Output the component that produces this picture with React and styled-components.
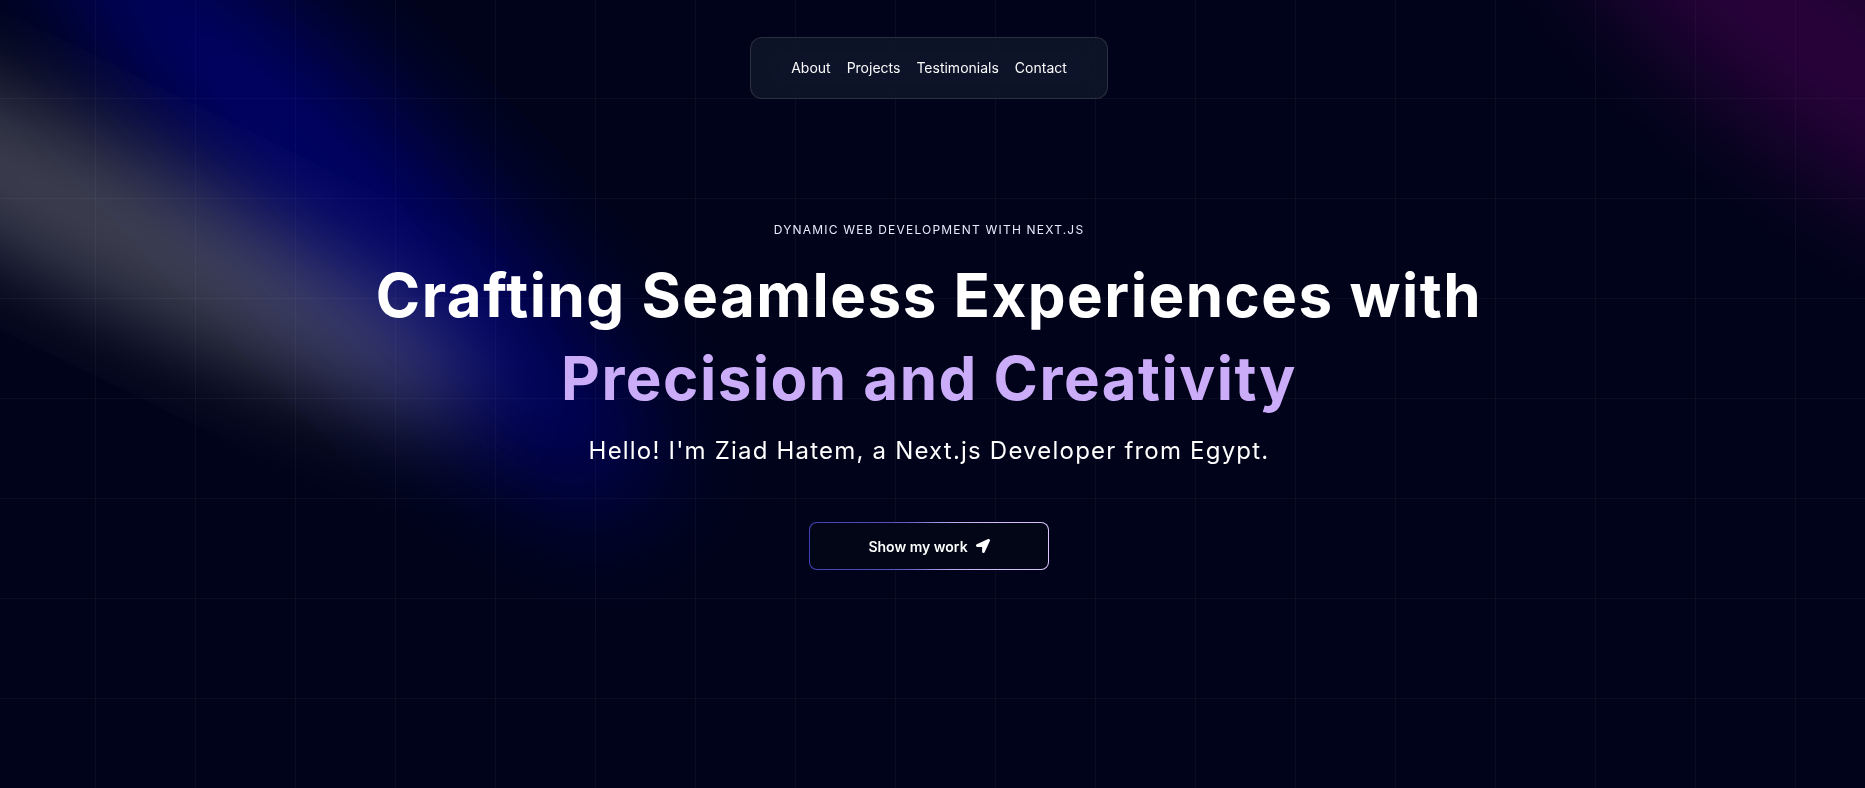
import React from "react";
import styled, { createGlobalStyle } from "styled-components";
import { FaLocationArrow } from "react-icons/fa";

const GlobalStyle = createGlobalStyle`
  * {
    box-sizing: border-box;
  }
  body {
    margin: 0;
    background: #000319;
    font-family: Inter, "Noto Sans", sans-serif;
    color: #fff;
  }
`;

const links = ["About", "Projects", "Testimonials", "Contact"];

// the blurred spotlights behind the hero
const Glows = () => (
  <GlowLayer viewBox="0 0 1865 788" preserveAspectRatio="none">
    <defs>
      <filter id="soft" x="-50%" y="-50%" width="200%" height="200%">
        <feGaussianBlur stdDeviation="46" />
      </filter>
      <filter id="softer" x="-50%" y="-50%" width="200%" height="200%">
        <feGaussianBlur stdDeviation="58" />
      </filter>
    </defs>
    <ellipse
      cx="345"
      cy="195"
      rx="430"
      ry="92"
      transform="rotate(46 345 195)"
      fill="#0000ff"
      fillOpacity="0.34"
      filter="url(#softer)"
    />
    <ellipse
      cx="120"
      cy="228"
      rx="400"
      ry="72"
      transform="rotate(26 120 228)"
      fill="#ffffff"
      fillOpacity="0.25"
      filter="url(#soft)"
    />
    <ellipse
      cx="1815"
      cy="40"
      rx="320"
      ry="92"
      transform="rotate(38 1815 40)"
      fill="#800080"
      fillOpacity="0.34"
      filter="url(#softer)"
    />
  </GlowLayer>
);

const App = () => {
  return (
    <>
      <GlobalStyle />
      <Page>
        <Grid />
        <Glows />
        <Nav>
          {links.map((l) => (
            <NavLink key={l} href={`#${l.toLowerCase()}`}>
              {l}
            </NavLink>
          ))}
        </Nav>
        <Hero>
          <Eyebrow>Dynamic Web Development with Next.js</Eyebrow>
          <Heading>
            Crafting Seamless Experiences with
            <br />
            <Accent>Precision and Creativity</Accent>
          </Heading>
          <Intro>Hello! I'm Ziad Hatem, a Next.js Developer from Egypt.</Intro>
          <MagicButton>
            <ButtonInner>
              Show my work
              <FaLocationArrow />
            </ButtonInner>
          </MagicButton>
        </Hero>
      </Page>
    </>
  );
};

export default App;

const Page = styled.main`
  position: relative;
  min-height: 788px;
  overflow: hidden;
  background: #000319;
  display: flex;
  flex-direction: column;
  align-items: center;
  padding: 37px 7px 0 0;
`;

const Grid = styled.div`
  position: absolute;
  inset: 0;
  background-image: linear-gradient(
      to right,
      rgba(255, 255, 255, 0.04) 1px,
      transparent 1px
    ),
    linear-gradient(to bottom, rgba(255, 255, 255, 0.04) 1px, transparent 1px);
  background-size: 100px 100px;
  background-position: -5px -2px;
`;

const GlowLayer = styled.svg`
  position: absolute;
  inset: 0;
  width: 100%;
  height: 100%;
  pointer-events: none;
`;

const Nav = styled.nav`
  position: relative;
  z-index: 5;
  display: flex;
  align-items: center;
  gap: 16px;
  padding: 20px 40px;
  border-radius: 12px;
  border: 1px solid rgba(255, 255, 255, 0.125);
  background: rgba(17, 25, 40, 0.75);
  backdrop-filter: blur(16px) saturate(180%);
`;

const NavLink = styled.a`
  font-size: 14px;
  line-height: 20px;
  color: #fafafa;
  text-decoration: none;
`;

const Hero = styled.section`
  position: relative;
  z-index: 2;
  margin-top: 123px;
  display: flex;
  flex-direction: column;
  align-items: center;
  max-width: 60vw;
`;

const Eyebrow = styled.p`
  margin: 0;
  font-size: 12px;
  line-height: 16px;
  letter-spacing: 0.1em;
  text-transform: uppercase;
  color: #e4ecff;
  text-align: center;
`;

const Heading = styled.h1`
  margin: 16px 0;
  font-size: 60px;
  line-height: 1.375;
  font-weight: 700;
  letter-spacing: 0.025em;
  text-align: center;
  color: #fff;
  white-space: nowrap;
`;

const Accent = styled.span`
  color: #cbacf9;
`;

const Intro = styled.p`
  margin: 0 0 16px;
  font-size: 24px;
  line-height: 32px;
  letter-spacing: 0.05em;
  text-align: center;
  color: #fff;
`;

const MagicButton = styled.button`
  margin-top: 39px;
  width: 240px;
  height: 48px;
  padding: 1px;
  border: none;
  border-radius: 8px;
  overflow: hidden;
  background: conic-gradient(
    from 90deg at 50% 50%,
    #e2cbff 0%,
    #393bb2 50%,
    #e2cbff 100%
  );
  cursor: pointer;
`;

const ButtonInner = styled.span`
  display: flex;
  align-items: center;
  justify-content: center;
  gap: 8px;
  width: 100%;
  height: 100%;
  border-radius: 7px;
  background: #020617;
  padding: 0 28px;
  font-family: Inter, sans-serif;
  font-size: 14px;
  font-weight: 600;
  color: #fff;

  svg {
    width: 14px;
    height: 14px;
  }
`;
